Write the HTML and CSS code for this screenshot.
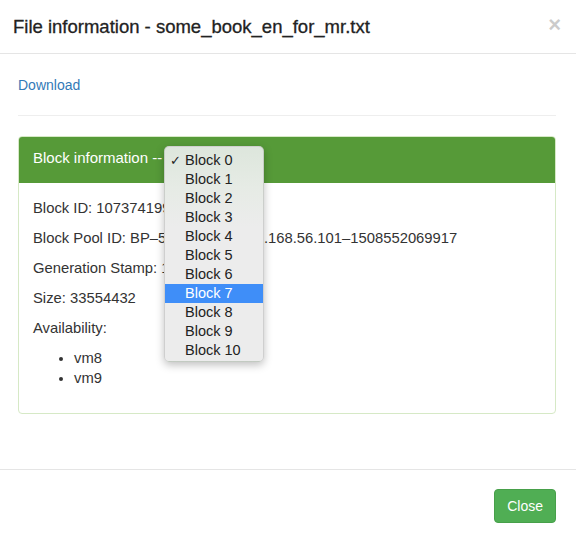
FILE: index.html
```html
<!DOCTYPE html>
<html>
<head>
<meta charset="utf-8">
<link rel="stylesheet" href="styles.css">
</head>
<body>
<div class="modal">
  <div class="modal-header">
    <h4 class="modal-title">File information - some_book_en_for_mr.txt</h4>
    <span class="close">&times;</span>
  </div>
  <div class="modal-body">
    <a class="link" href="#">Download</a>
    <hr class="sep">
    <div class="panel">
      <div class="panel-heading">Block information --</div>
      <div class="panel-body">
        <p>Block ID: 1073741995</p>
        <p>Block Pool ID: BP–511066843–192.168.56.101–1508552069917</p>
        <p>Generation Stamp: 1001171</p>
        <p>Size: 33554432</p>
        <p>Availability:</p>
        <ul class="hosts">
          <li>vm8</li>
          <li>vm9</li>
        </ul>
      </div>
    </div>
  </div>
  <div class="modal-footer">
    <button class="btn-close">Close</button>
  </div>
  <div class="popup">
    <div class="opt checked"><span class="check">✓</span>Block 0</div>
    <div class="opt">Block 1</div>
    <div class="opt">Block 2</div>
    <div class="opt">Block 3</div>
    <div class="opt">Block 4</div>
    <div class="opt">Block 5</div>
    <div class="opt">Block 6</div>
    <div class="opt active">Block 7</div>
    <div class="opt">Block 8</div>
    <div class="opt">Block 9</div>
    <div class="opt">Block 10</div>
  </div>
</div>
</body>
</html>
```
FILE: styles.css
```css
html, body {
  margin: 0;
  padding: 0;
  background: #fff;
}
body {
  font-family: "Liberation Sans", Arial, sans-serif;
  font-size: 14px;
  line-height: 20px;
  color: #333;
}
.modal {
  position: relative;
  width: 576px;
  height: 540px;
  overflow: hidden;
}
.modal-header {
  display: flex;
  justify-content: space-between;
  align-items: center;
  padding: 14px 15px 14px 13px;
  border-bottom: 1px solid #e5e5e5;
}
.modal-title {
  margin: 0;
  font-size: 18.5px;
  line-height: 25px;
  font-weight: normal;
  color: #222;
  -webkit-text-stroke: 0.3px #222;
}
.close {
  font-size: 22px;
  font-weight: bold;
  line-height: 20px;
  color: #000;
  opacity: 0.2;
  margin-right: 0;
  margin-top: -4px;
}
.modal-body {
  padding: 21px 20px 35px 18px;
}
.link {
  color: #337ab7;
  text-decoration: none;
}
.sep {
  margin: 20px 0;
  border: 0;
  border-top: 1px solid #eee;
  height: 0;
}
.panel {
  border: 1px solid #d6e9c6;
  border-radius: 4px;
  margin-bottom: 20px;
}
.panel-heading {
  background: #569a38;
  color: #fff;
  font-size: 15px;
  padding: 11px 14px 15px;
  border-radius: 3px 3px 0 0;
}
.panel-body {
  padding: 15px 14px;
  font-size: 14.8px;
}
.panel-body p {
  margin: 0 0 10px;
}
.hosts {
  margin: 0 0 10px;
  padding-left: 41px;
}
.modal-footer {
  display: flex;
  justify-content: flex-end;
  padding: 19px 20px 15px;
  border-top: 1px solid #e5e5e5;
}
.btn-close {
  font-family: "Liberation Sans", Arial, sans-serif;
  font-size: 14px;
  line-height: 20px;
  color: #fff;
  background: #50ae54;
  border: 1px solid #47a04a;
  border-radius: 4px;
  padding: 6px 12px;
}
.popup {
  position: absolute;
  left: 164px;
  top: 146px;
  width: 100px;
  height: 216px;
  box-sizing: border-box;
  padding: 4px 0;
  background: linear-gradient(to bottom, #dde6dc 0px, #e6ebe5 40px, #ececec 80px, #ececec 100%);
  border: 1px solid rgba(0, 0, 0, 0.12);
  border-radius: 5px;
  box-shadow: 0 3px 8px rgba(0, 0, 0, 0.25);
}
.opt {
  position: relative;
  height: 19px;
  line-height: 19px;
  padding-left: 20px;
  font-size: 14.5px;
  color: #222;
}
.opt.active {
  background: #3f8ef8;
  color: #fff;
}
.check {
  position: absolute;
  left: 5px;
  top: 0;
  font-family: "DejaVu Sans", sans-serif;
  font-size: 13px;
  font-weight: bold;
}
```
